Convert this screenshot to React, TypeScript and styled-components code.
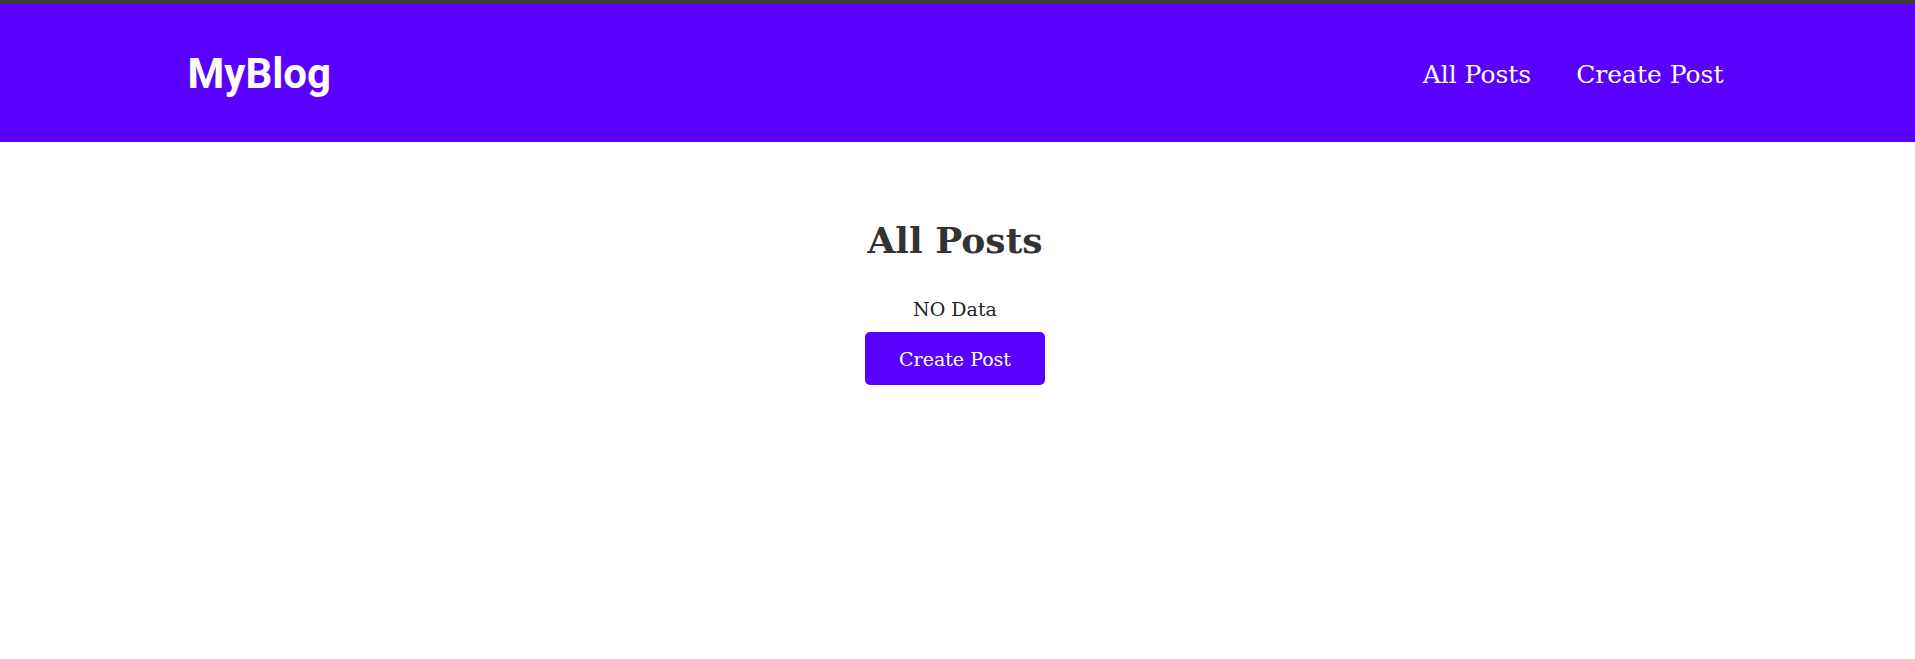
import styled, { createGlobalStyle } from "styled-components";

const GlobalStyle = createGlobalStyle`
  * {
    box-sizing: border-box;
  }
  body {
    margin: 0;
    background: #fff;
    font-family: "Roboto Slab", "DejaVu Serif", serif;
    color: #333;
  }
`;

const Header = styled.header`
  border-top: 4px solid #3b3b3b;
  background-color: #5900ff;
  height: 142px;
`;

const NavContainer = styled.nav`
  max-width: 1546px;
  height: 100%;
  margin: 0 auto;
  padding-left: 3px;
  display: flex;
  align-items: center;
  justify-content: space-between;
`;

const Logo = styled.a`
  font-family: "Roboto", sans-serif;
  font-weight: 700;
  font-size: 42px;
  color: #fff;
  text-decoration: none;
`;

const NavLinks = styled.div`
  display: flex;
  align-items: center;
  gap: 45px;
  padding: 2px 7px 0 0;
`;

const NavLink = styled.a`
  font-size: 25px;
  color: #fff;
  text-decoration: none;
`;

const Main = styled.main`
  display: flex;
  flex-direction: column;
  align-items: center;
  padding: 76px 5px 0 0;
`;

const Title = styled.h1`
  margin: 0;
  font-size: 36px;
  line-height: 44px;
  font-weight: 700;
  color: #333;
`;

const EmptyText = styled.p`
  margin: 35px 0 0;
  font-size: 19px;
  line-height: 24px;
  color: #222;
`;

const PrimaryButton = styled.button`
  margin-top: 11px;
  width: 180px;
  height: 53px;
  border: none;
  border-radius: 5px;
  background-color: #5900ff;
  color: #fff;
  font-family: inherit;
  font-size: 19px;
  cursor: pointer;
  &:hover {
    background-color: #4a00d6;
  }
`;

export default function App() {
  return (
    <>
      <GlobalStyle />
      <Header>
        <NavContainer>
          <Logo href="#">MyBlog</Logo>
          <NavLinks>
            <NavLink href="#">All Posts</NavLink>
            <NavLink href="#">Create Post</NavLink>
          </NavLinks>
        </NavContainer>
      </Header>
      <Main>
        <Title>All Posts</Title>
        <EmptyText>NO Data</EmptyText>
        <PrimaryButton>Create Post</PrimaryButton>
      </Main>
    </>
  );
}
